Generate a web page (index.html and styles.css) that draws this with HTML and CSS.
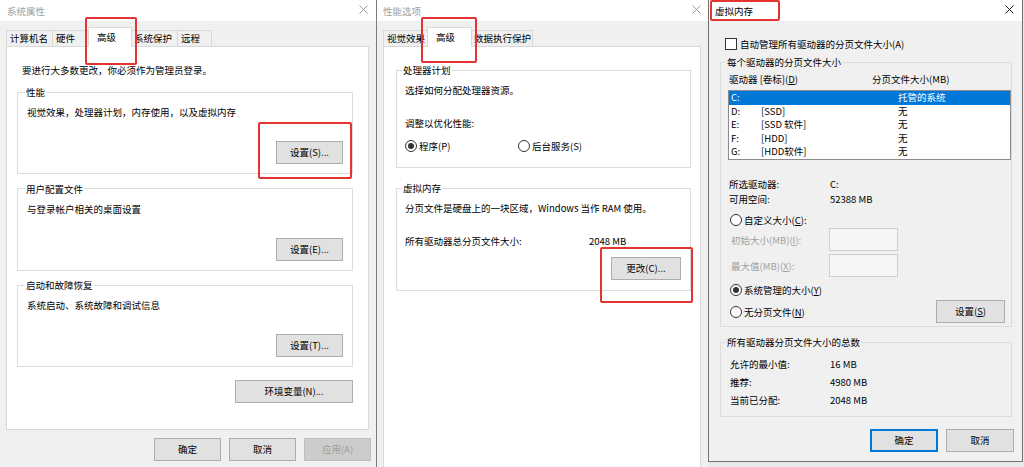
FILE: index.html
```html
<!DOCTYPE html>
<html lang="zh-CN">
<head>
<meta charset="utf-8">
<title>虚拟内存设置</title>
<link rel="stylesheet" href="styles.css">
</head>
<body>
<div class="desk">

  <section class="win win-sys">
    <header class="titlebar">
      <span class="title">系统属性</span>
      <svg class="close" viewBox="0 0 9 9"><path d="M0.5 0.5L8.5 8.5M8.5 0.5L0.5 8.5"/></svg>
    </header>
    <nav class="tabs tabs-sys">
      <span class="tab">计算机名</span>
      <span class="tab">硬件</span>
      <span class="tab sel">高级</span>
      <span class="tab">系统保护</span>
      <span class="tab">远程</span>
    </nav>
    <div class="panel panel-sys">
      <p class="intro">要进行大多数更改，你必须作为管理员登录。</p>
      <fieldset class="grp grp-sys">
        <legend>性能</legend>
        <p class="desc">视觉效果，处理器计划，内存使用，以及虚拟内存</p>
        <div class="btn-row btn-row-sys"><button class="btn">设置(S)...</button></div>
      </fieldset>
      <fieldset class="grp grp-sys">
        <legend>用户配置文件</legend>
        <p class="desc">与登录帐户相关的桌面设置</p>
        <div class="btn-row btn-row-sys"><button class="btn">设置(E)...</button></div>
      </fieldset>
      <fieldset class="grp grp-sys">
        <legend>启动和故障恢复</legend>
        <p class="desc">系统启动、系统故障和调试信息</p>
        <div class="btn-row btn-row-sys"><button class="btn">设置(T)...</button></div>
      </fieldset>
      <div class="btn-row env-row"><button class="btn btn-env">环境变量(N)...</button></div>
    </div>
    <div class="dlg-buttons dlg-buttons-sys">
      <button class="btn">确定</button>
      <button class="btn">取消</button>
      <button class="btn" disabled>应用(A)</button>
    </div>
    <div class="mark mark-tab1"></div>
    <div class="mark mark-perf-btn"></div>
  </section>

  <section class="win win-perf">
    <header class="titlebar">
      <span class="title">性能选项</span>
      <svg class="close" viewBox="0 0 9 9"><path d="M0.5 0.5L8.5 8.5M8.5 0.5L0.5 8.5"/></svg>
    </header>
    <nav class="tabs tabs-perf">
      <span class="tab">视觉效果</span>
      <span class="tab sel">高级</span>
      <span class="tab">数据执行保护</span>
    </nav>
    <div class="panel panel-perf">
      <fieldset class="grp grp-perf grp-cpu">
        <legend>处理器计划</legend>
        <p class="desc">选择如何分配处理器资源。</p>
        <p class="desc desc-gap">调整以优化性能:</p>
        <div class="radio-pair">
          <div class="radio on"><span class="dot"></span>程序(P)</div>
          <div class="radio"><span class="dot"></span>后台服务(S)</div>
        </div>
      </fieldset>
      <fieldset class="grp grp-perf grp-vmem">
        <legend>虚拟内存</legend>
        <p class="desc">分页文件是硬盘上的一块区域，Windows 当作 RAM 使用。</p>
        <div class="total-row"><span>所有驱动器总分页文件大小:</span><span>2048 MB</span></div>
        <div class="btn-row btn-row-perf"><button class="btn btn-change">更改(C)...</button></div>
      </fieldset>
    </div>
    <div class="mark mark-tab2"></div>
    <div class="mark mark-change"></div>
  </section>

  <section class="win win-vm">
    <header class="titlebar active">
      <span class="title">虚拟内存</span>
      <svg class="close" viewBox="0 0 9 9"><path d="M0.5 0.5L8.5 8.5M8.5 0.5L0.5 8.5"/></svg>
    </header>
    <div class="vm-body">
      <div class="check-row"><span class="checkbox"></span><span>自动管理所有驱动器的分页文件大小(A)</span></div>
      <fieldset class="grp grp-vm grp-drives">
        <legend>每个驱动器的分页文件大小</legend>
        <div class="list-head"><span>驱动器 [卷标](<span class="ul">D</span>)</span><span>分页文件大小(MB)</span></div>
        <div class="listbox">
          <div class="lrow selected"><span>C:</span><span></span><span>托管的系统</span></div>
          <div class="lrow"><span>D:</span><span>[SSD]</span><span>无</span></div>
          <div class="lrow"><span>E:</span><span>[SSD 软件]</span><span>无</span></div>
          <div class="lrow"><span>F:</span><span>[HDD]</span><span>无</span></div>
          <div class="lrow"><span>G:</span><span>[HDD软件]</span><span>无</span></div>
        </div>
        <div class="kv kv-first"><span>所选驱动器:</span><span>C:</span></div>
        <div class="kv kv-second"><span>可用空间:</span><span>52388 MB</span></div>
        <div class="radio vm-radio vm-radio-custom"><span class="dot"></span><span>自定义大小(<span class="ul">C</span>):</span></div>
        <div class="size-row size-row-first"><span class="muted">初始大小(MB)(<span class="ul">I</span>):</span><span class="field"></span></div>
        <div class="size-row"><span class="muted">最大值(MB)(<span class="ul">X</span>):</span><span class="field"></span></div>
        <div class="radio on vm-radio vm-radio-system"><span class="dot"></span><span>系统管理的大小(<span class="ul">Y</span>)</span></div>
        <div class="set-row">
          <div class="radio vm-radio"><span class="dot"></span><span>无分页文件(<span class="ul">N</span>)</span></div>
          <button class="btn btn-set">设置(<span class="ul">S</span>)</button>
        </div>
      </fieldset>
      <fieldset class="grp grp-vm grp-totals">
        <legend>所有驱动器分页文件大小的总数</legend>
        <div class="sum sum-first"><span>允许的最小值:</span><span>16 MB</span></div>
        <div class="sum"><span>推荐:</span><span>4980 MB</span></div>
        <div class="sum"><span>当前已分配:</span><span>2048 MB</span></div>
      </fieldset>
      <div class="dlg-buttons dlg-buttons-vm">
        <button class="btn btn-vm btn-default">确定</button>
        <button class="btn btn-vm">取消</button>
      </div>
    </div>
    <div class="mark mark-title"></div>
  </section>

</div>
</body>
</html>
```

FILE: styles.css
```css
* { box-sizing: border-box; }
html, body { margin: 0; padding: 0; }
body {
  width: 1024px;
  height: 467px;
  overflow: hidden;
  background: #e8e8e8;
  font-family: "Noto Sans CJK SC", "Noto Sans", sans-serif;
  font-size: 9.5px;
  line-height: 12px;
  color: #000;
  text-autospace: no-autospace;
}
p { margin: 0; }
.ul { text-decoration: underline; text-underline-offset: 1px; }

.desk { display: flex; align-items: flex-start; height: 467px; }

.win { position: relative; flex: none; background: #f0f0f0; }
.win-sys { width: 376px; height: 467px; }
.win-perf { width: 332px; height: 467px; border-left: 1px solid #7c7c7c; }
.win-vm { width: 315px; height: 462px; border: 1px solid #707070; border-top: none; }

/* title bars */
.titlebar {
  height: 21px;
  background: #fff;
  display: flex;
  align-items: center;
  justify-content: space-between;
  padding-left: 6px;
}
.win-sys .titlebar { padding-left: 7px; }
.title { color: #a0a0a0; }
.close { width: 9px; height: 9px; margin-right: 7px; margin-top: -2px; fill: none; stroke: #9a9a9a; stroke-width: 1; }
.win-sys .close { margin-right: 8px; }
.active .title { color: #000; }
.active .close { stroke: #222; margin-right: 8px; }

/* tabs */
.tabs {
  display: grid;
  width: max-content;
  height: 20px;
  margin: 6px 0 -1px 6px;
  position: relative;
  z-index: 1;
}
.tabs-sys { grid-template-columns: 46px 38px 40px 47px 35px; }
.tabs-perf { grid-template-columns: 46px 41px 63px; }
.tab {
  align-self: end;
  height: 16px;
  margin-bottom: 1px;
  border-top: 1px solid #d9d9d9;
  border-left: 1px solid #d9d9d9;
  background: #f0f0f0;
  padding-left: 3px;
  line-height: 15px;
  white-space: nowrap;
}
.tab:last-child { border-right: 1px solid #d9d9d9; }
.tab.sel {
  position: relative;
  height: 20px;
  margin: 0 -2px;
  background: #fff;
  border-right: 1px solid #d9d9d9;
  padding-left: 8px;
  line-height: 18px;
}

/* panels */
.panel { background: #fff; border: 1px solid #d9d9d9; margin-left: 6px; }
.panel-sys { width: 363px; height: 384px; }
.panel-perf { width: 318px; height: 440px; }

.intro { margin: 17px 0 0 15px; }

/* group boxes */
.grp { margin: 0; min-width: 0; border: 1px solid #dcdcdc; }
.grp legend { padding: 0 1px; line-height: 12px; height: 12px; }

.grp-sys { margin: 8.5px 15px 0 10px; padding: 0 9px 9px 9px; }
.grp-sys:first-of-type { margin-top: 10px; }
.grp-sys legend { margin-left: -2px; }
.desc { margin-top: 8px; }

.btn-row { display: flex; justify-content: flex-end; }
.btn-row-sys { margin-top: 23px; }
.env-row { margin: 13px 15px 0 0; }

/* buttons */
.btn {
  font: inherit;
  color: #000;
  width: 67px;
  height: 23px;
  padding: 0;
  line-height: 21px;
  background: #e1e1e1;
  border: 1px solid #adadad;
  border-radius: 0;
}
.btn:disabled { background: #cccccc; border-color: #bfbfbf; color: #a0a0a0; }
.btn-env { width: 118px; }
.btn-change { width: 70px; }
.btn-set { width: 69px; }
.btn-vm { width: 68px; }
.btn-default { border: 1px solid #0078d7; box-shadow: inset 0 0 0 1px #0078d7; }

.dlg-buttons { display: flex; justify-content: flex-end; gap: 8px; }
.dlg-buttons-sys { margin-top: 8px; padding-right: 5px; }
.dlg-buttons-vm { margin: 12px -2px 0 0; }

/* perf window */
.grp-perf { margin: 0 9px 0 12px; padding: 0 9px 10px 8px; }
.grp-perf legend { margin-left: -3px; }
.grp-cpu { margin-top: 17px; padding-bottom: 15px; }
.grp-vmem { margin-top: 14px; }
.desc-gap { margin-top: 21px; }
.radio-pair { display: grid; grid-template-columns: 113px 1fr; margin-top: 11px; }
.total-row { display: grid; grid-template-columns: 184px 1fr; margin-top: 21px; }
.btn-row-perf { margin-top: 10px; }

/* radios & checkboxes */
.radio { display: flex; align-items: center; gap: 2px; height: 12px; white-space: nowrap; }
.dot {
  flex: none;
  width: 12px;
  height: 12px;
  border: 1px solid #333;
  border-radius: 50%;
  background: #fff;
  display: flex;
  align-items: center;
  justify-content: center;
}
.radio.on .dot::after { content: ""; width: 6px; height: 6px; border-radius: 50%; background: #333; }

.checkbox { flex: none; width: 12px; height: 12px; border: 1px solid #333; background: #fff; }

/* virtual memory window */
.vm-body { padding: 0 10px 0 11px; }
.check-row { display: flex; align-items: center; gap: 3px; margin: 17px 0 0 5px; height: 12px; white-space: nowrap; }
.grp-vm { padding: 0 0 3px 7px; }
.grp-vm legend { margin-left: -2px; }
.grp-drives { margin-top: 6px; }
.grp-totals { margin-top: 9px; padding-bottom: 7px; }

.list-head { display: grid; grid-template-columns: 143px 1fr; margin: 5px 0 0 1px; }
.listbox { margin-top: 5px; border: 1px solid #8c8c8c; background: #fff; height: 69.5px; }
.lrow { display: grid; grid-template-columns: 30px 137px 1fr; padding-left: 2px; height: 13.5px; line-height: 13.5px; white-space: nowrap; }
.lrow.selected { background: #0078d7; color: #fff; }

.kv { display: grid; grid-template-columns: 101px 1fr; margin-left: 1px; }
.kv-first { margin-top: 18.5px; }
.kv-second { margin-top: 3px; }

.vm-radio { margin-left: 2px; }
.vm-radio-custom { margin-top: 9px; }
.vm-radio-system { margin-top: 7px; }

.size-row { display: grid; grid-template-columns: 98px 69px; align-items: center; margin: 3px 0 0 3px; height: 23px; }
.size-row-first { margin-top: 2px; }
.muted { color: #a0a0a0; }
.field { height: 23px; border: 1px solid #cfcfcf; background: #f6f6f6; }

.set-row { display: flex; align-items: center; justify-content: space-between; margin: 4px 6px 0 0; height: 23px; }

.sum { display: grid; grid-template-columns: 100px 1fr; margin-left: 2px; line-height: 18px; }
.sum-first { margin-top: 7px; }

/* red annotation boxes */
.mark { position: absolute; border: 2px solid #e3342f; border-radius: 2px; z-index: 5; pointer-events: none; }
.mark-tab1 { left: 85px; top: 17px; width: 52px; height: 48px; }
.mark-perf-btn { left: 258px; top: 122px; width: 94px; height: 57px; }
.mark-tab2 { left: 44px; top: 17px; width: 56px; height: 46px; }
.mark-change { left: 223px; top: 247px; width: 93px; height: 56px; }
.mark-title { left: 1px; top: 0; width: 70px; height: 21px; }
```
